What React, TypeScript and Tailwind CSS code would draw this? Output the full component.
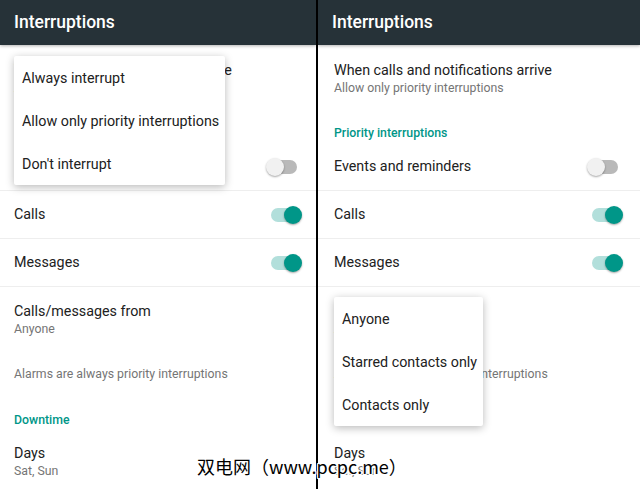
import { JSX } from "react";

type MenuProps = {
  items: string[];
  className: string;
};

const Menu = ({ items, className }: MenuProps): JSX.Element => (
  <div
    className={`absolute z-10 bg-white rounded-[2px] shadow-[0_2px_8px_rgba(0,0,0,0.28)] ${className}`}
  >
    {items.map((item) => (
      <div
        key={item}
        className="h-[43px] flex items-center pt-[2px] pl-[8px] pr-[8px] text-[14.3px] text-[#212121] whitespace-nowrap"
      >
        {item}
      </div>
    ))}
  </div>
);

const Toggle = ({ on }: { on: boolean }): JSX.Element => (
  <div className="relative w-[36px] h-[20px] shrink-0">
    <div
      className={`absolute left-[5px] right-[5px] top-[3px] h-[14px] rounded-full ${
        on ? "bg-[#b2dfdb]" : "bg-[#b9b9b9]"
      }`}
    />
    <div
      className={`absolute top-[1px] w-[18px] h-[18px] rounded-full shadow-[0_1px_2px_rgba(0,0,0,0.35)] ${
        on ? "right-0 bg-[#009688]" : "left-0 bg-[#f1f1f1]"
      }`}
    />
  </div>
);

const SwitchRow = ({
  label,
  on,
  padding,
}: {
  label: string;
  on: boolean;
  padding: string;
}): JSX.Element => (
  <div
    className={`h-[48px] flex items-center justify-between border-b border-[#eeeeee] ${padding}`}
  >
    <span className="text-[14.3px] text-[#212121]">{label}</span>
    <Toggle on={on} />
  </div>
);

const Panel = ({
  padding,
  menu,
}: {
  padding: string;
  menu?: JSX.Element;
}): JSX.Element => (
  <div className="relative flex flex-col h-full bg-white overflow-hidden">
    <div className="h-[45px] shrink-0 bg-[#263238] flex items-center shadow-[0_1px_3px_rgba(0,0,0,0.3)] z-[1]">
      <span className="pl-[14px] text-[17.5px] font-medium text-white">
        Interruptions
      </span>
    </div>

    <div className={`pt-[15px] h-[60px] ${padding}`}>
      <div className="text-[14.3px] leading-[20px] text-[#212121] whitespace-nowrap">
        When calls and notifications arrive
      </div>
      <div className="text-[12.3px] leading-[17px] text-[#757575]">
        Allow only priority interruptions
      </div>
    </div>

    <div className={`h-[38px] pt-[20px] ${padding}`}>
      <div className="text-[12.3px] leading-[17px] font-medium text-[#009688]">
        Priority interruptions
      </div>
    </div>

    <SwitchRow label="Events and reminders" on={false} padding={padding} />
    <SwitchRow label="Calls" on padding={padding} />
    <SwitchRow label="Messages" on padding={padding} />

    <div className={`pt-[14px] h-[70px] ${padding}`}>
      <div className="text-[14.3px] leading-[20px] text-[#212121]">
        Calls/messages from
      </div>
      <div className="text-[12.3px] leading-[17px] text-[#757575]">Anyone</div>
    </div>

    <div className={`pt-[9px] ${padding}`}>
      <div className="text-[12.3px] leading-[17px] text-[#757575]">
        Alarms are always priority interruptions
      </div>
    </div>

    <div className={`pt-[29px] ${padding}`}>
      <div className="text-[12.3px] leading-[17px] font-medium text-[#009688]">
        Downtime
      </div>
    </div>

    <div className={`pt-[14px] ${padding}`}>
      <div className="text-[14.3px] leading-[20px] text-[#212121]">Days</div>
      <div className="text-[12.3px] leading-[17px] text-[#757575]">
        Sat, Sun
      </div>
    </div>

    {menu}
  </div>
);

export default function App(): JSX.Element {
  return (
    <div
      className="relative w-[640px] h-[489px] flex bg-black overflow-hidden"
      style={{ fontFamily: "Roboto, 'Noto Sans', sans-serif" }}
    >
      <div className="w-[316px] h-full">
        <Panel
          padding="px-[14px]"
          menu={
            <Menu
              className="left-[14px] top-[56px] w-[211px]"
              items={[
                "Always interrupt",
                "Allow only priority interruptions",
                "Don't interrupt",
              ]}
            />
          }
        />
      </div>
      <div className="w-[2px] h-full bg-black" />
      <div className="flex-1 h-full">
        <Panel
          padding="pl-[16px] pr-[17px]"
          menu={
            <Menu
              className="left-[16px] top-[297px] w-[149px]"
              items={["Anyone", "Starred contacts only", "Contacts only"]}
            />
          }
        />
      </div>

      {/* watermark */}
      <div
        className="absolute left-[197px] top-[453px] text-[18px] leading-[26px] text-black whitespace-nowrap"
        style={{
          fontFamily: "'Noto Sans CJK SC', 'Liberation Sans', sans-serif",
          textShadow:
            "1px 0 0 #fff, -1px 0 0 #fff, 0 1px 0 #fff, 0 -1px 0 #fff, 1px 1px 0 #fff, -1px -1px 0 #fff, 1px -1px 0 #fff, -1px 1px 0 #fff",
        }}
      >
        双电网（www.pcpc.me）
      </div>
    </div>
  );
}
